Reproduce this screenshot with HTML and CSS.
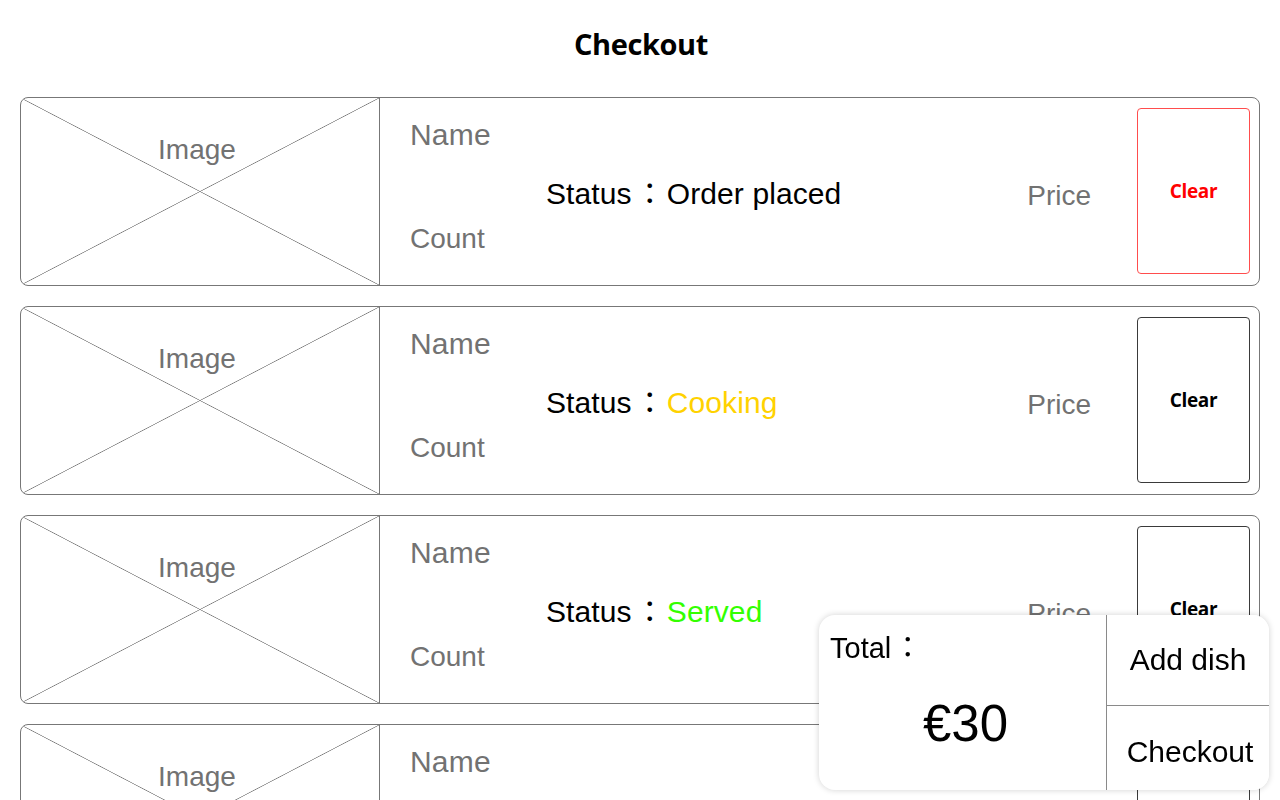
FILE: index.html
```html
<!DOCTYPE html>
<html lang="en">
<head>
<meta charset="utf-8">
<title>Checkout</title>
<link rel="stylesheet" href="styles.css">
</head>
<body>
<header class="header"><h1 class="title">Checkout</h1></header>
<main class="list">
  <div class="card">
    <div class="image"><span class="image-label">Image</span></div>
    <div class="info"><span class="name">Name</span><span class="count">Count</span></div>
    <div class="status">Status<span class="colon">：</span><span class="st-placed">Order placed</span></div>
    <div class="price">Price</div>
    <button class="clear clear-red">Clear</button>
  </div>
  <div class="card">
    <div class="image"><span class="image-label">Image</span></div>
    <div class="info"><span class="name">Name</span><span class="count">Count</span></div>
    <div class="status">Status<span class="colon">：</span><span class="st-cooking">Cooking</span></div>
    <div class="price">Price</div>
    <button class="clear">Clear</button>
  </div>
  <div class="card">
    <div class="image"><span class="image-label">Image</span></div>
    <div class="info"><span class="name">Name</span><span class="count">Count</span></div>
    <div class="status">Status<span class="colon">：</span><span class="st-served">Served</span></div>
    <div class="price">Price</div>
    <button class="clear">Clear</button>
  </div>
  <div class="card">
    <div class="image"><span class="image-label">Image</span></div>
    <div class="info"><span class="name">Name</span><span class="count">Count</span></div>
    <div class="status">Status<span class="colon">：</span><span class="st-served">Served</span></div>
    <div class="price">Price</div>
    <button class="clear">Clear</button>
  </div>
</main>
<aside class="summary">
  <div class="total">
    <div class="total-label">Total<span class="colon">：</span></div>
    <div class="total-amount">€30</div>
  </div>
  <div class="actions">
    <button class="action action-top">Add dish</button>
    <button class="action action-bottom">Checkout</button>
  </div>
</aside>
</body>
</html>
```
FILE: styles.css
```css
html, body {
  margin: 0;
  padding: 0;
  background: #ffffff;
  overflow: hidden;
}
body {
  font-family: "Liberation Sans", Arial, "Noto Sans CJK JP", sans-serif;
  color: #000;
  height: 800px;
}
.header {
  height: 97px;
  display: flex;
  justify-content: center;
}
.title {
  margin: 0;
  height: 88px;
  line-height: 88px;
  font-family: "Open Sans", "Noto Sans", sans-serif;
  font-weight: 700;
  font-size: 29px;
  letter-spacing: -0.4px;
  padding-left: 2px;
}
.list {
  display: flex;
  flex-direction: column;
  gap: 20px;
  padding: 0 20px;
}
.card {
  flex: none;
  height: 189px;
  box-sizing: border-box;
  border: 1px solid #777777;
  border-radius: 8px;
  overflow: hidden;
  display: flex;
  align-items: stretch;
}
.image {
  flex: none;
  width: 358px;
  border-right: 1px solid #777777;
  display: flex;
  justify-content: center;
  align-items: flex-start;
  background:
    linear-gradient(to top right, transparent calc(50% - 0.7px), #7c7c7c 50%, transparent calc(50% + 0.7px)),
    linear-gradient(to bottom right, transparent calc(50% - 0.7px), #7c7c7c 50%, transparent calc(50% + 0.7px));
}
.image-label {
  margin-top: 36px;
  margin-left: -6px;
  font-size: 28px;
  line-height: 32px;
  color: #727272;
}
.info {
  flex: none;
  width: 136px;
  padding-left: 30px;
  display: flex;
  flex-direction: column;
  justify-content: space-between;
  padding-top: 21px;
  padding-bottom: 30px;
  font-size: 28px;
  line-height: 32px;
  color: #727272;
}
.name {
  font-size: 30px;
  letter-spacing: 0.2px;
}
.status {
  flex: 1;
  align-self: center;
  margin-top: 2px;
  font-size: 30px;
  line-height: 34px;
  letter-spacing: 0.1px;
}
.colon {
  font-family: "Noto Sans CJK JP", sans-serif;
  font-size: 30px;
  padding: 0 2px 0 3px;
}
.st-placed { color: #000; }
.st-cooking { color: #ffd200; }
.st-served { color: #33ff00; }
.price {
  flex: none;
  align-self: center;
  margin-top: 9px;
  font-size: 28px;
  line-height: 32px;
  color: #727272;
  margin-right: 46px;
}
.clear {
  flex: none;
  width: 113px;
  height: 166px;
  margin: 10px 9px 0 0;
  padding: 0 0 1px 0;
  box-sizing: border-box;
  background: #fff;
  border: 1px solid #3a3a3a;
  border-radius: 4px;
  font-family: "Open Sans", "Noto Sans", sans-serif;
  font-weight: 700;
  font-size: 19px;
  letter-spacing: -0.3px;
  color: #000;
}
.clear-red {
  border-color: #ff4d4d;
  color: #ff0000;
}
.summary {
  position: fixed;
  right: 11px;
  bottom: 10px;
  width: 450px;
  height: 175px;
  background: #fff;
  border-radius: 16px;
  box-shadow: 0 0 6px rgba(0, 0, 0, 0.18);
  display: flex;
  overflow: hidden;
}
.total {
  flex: none;
  width: 287px;
  border-right: 1px solid #8a8a8a;
  display: flex;
  flex-direction: column;
}
.total-label {
  padding: 14px 0 0 11px;
  font-size: 29px;
  line-height: 32px;
}
.total-label .colon {
  font-size: 29px;
  padding: 0 0 0 2px;
}
.total-amount {
  flex: 1;
  display: flex;
  justify-content: center;
  align-items: center;
  font-size: 51px;
  padding-bottom: 8px;
  padding-left: 6px;
}
.actions {
  flex: 1;
  display: flex;
  flex-direction: column;
}
.action {
  background: #fff;
  border: none;
  margin: 0;
  padding: 0;
  font-family: "Liberation Sans", Arial, sans-serif;
  font-size: 30px;
  color: #000;
}
.action-top {
  height: 90px;
  flex: none;
  padding-top: 0;
}
.action-bottom {
  flex: 1;
  border-top: 1px solid #8a8a8a;
  padding-top: 8px;
  padding-left: 4px;
}
```
